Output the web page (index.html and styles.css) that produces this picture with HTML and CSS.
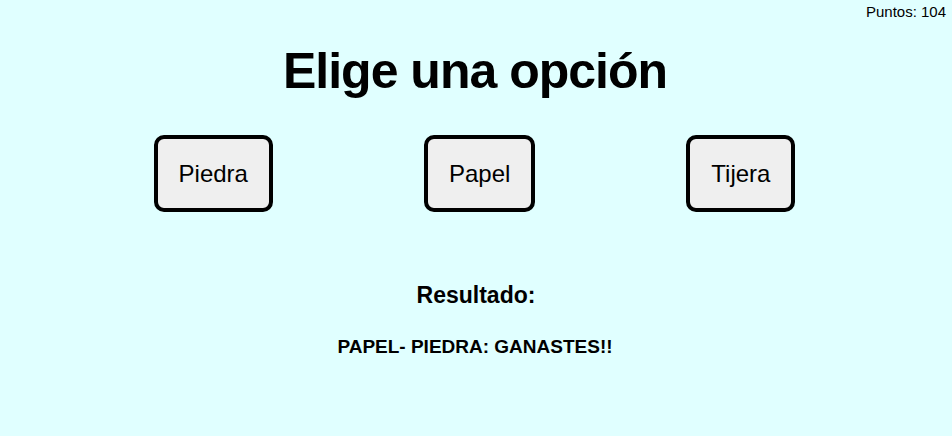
FILE: index.html
```html
<!DOCTYPE html>
<html lang="es">
<head>
<meta charset="utf-8">
<title>Piedra, Papel o Tijera</title>
<link rel="stylesheet" href="styles.css">
</head>
<body>
  <p class="score">Puntos: 104</p>
  <h1 class="title">Elige una opción</h1>
  <div class="choices">
    <button class="choice">Piedra</button>
    <button class="choice">Papel</button>
    <button class="choice">Tijera</button>
  </div>
  <h2 class="result-title">Resultado:</h2>
  <p class="result">PAPEL- PIEDRA: GANASTES!!</p>
</body>
</html>
```

FILE: styles.css
```css
html, body {
  margin: 0;
  padding: 0;
}

body {
  background: #e0ffff;
  color: #000;
  font-family: "Liberation Sans", Arial, sans-serif;
  text-align: center;
  height: 436px;
  overflow: hidden;
}

.score {
  margin: 0;
  padding: 3px 6px 0 0;
  font-size: 15px;
  line-height: 17px;
  text-align: right;
}

.title {
  margin: 21px 0 0;
  font-size: 50px;
  line-height: 60px;
  font-weight: bold;
  letter-spacing: -1px;
  padding-right: 2px;
}

.choices {
  display: flex;
  justify-content: center;
  gap: 151px;
  margin-top: 34px;
  padding-right: 3px;
}

.choice {
  font-family: "Liberation Sans", Arial, sans-serif;
  font-size: 24px;
  line-height: 29px;
  color: #000;
  background: #efefef;
  border: 4px solid #000;
  border-radius: 10px;
  padding: 20px 21px;
  margin: 0;
}

.result-title {
  margin: 69px 0 0;
  font-size: 23px;
  line-height: 28px;
  font-weight: bold;
}

.result {
  margin: 26px 0 0;
  font-size: 19px;
  line-height: 23px;
  font-weight: bold;
  padding-right: 2px;
}
```
